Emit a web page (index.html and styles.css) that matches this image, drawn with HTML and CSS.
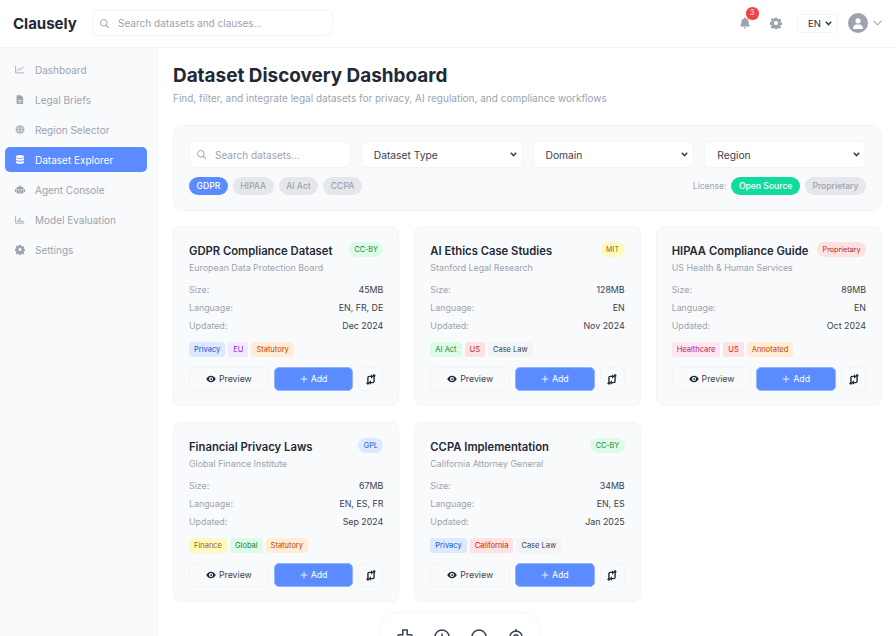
FILE: index.html
```html
<!DOCTYPE html>
<html lang="en">
<head>
  <meta charset="UTF-8">
  <meta name="viewport" content="width=device-width, initial-scale=1.0">
  <title>Clausely - Dataset Discovery</title>
  <link rel="stylesheet" href="styles.css">
</head>
<body>
  <!-- Shared icons -->
  <svg class="sprite" width="0" height="0">
    <symbol id="i-search" viewBox="0 0 16 16"><circle cx="7" cy="7" r="4.8" fill="none" stroke="currentColor" stroke-width="1.4"/><path d="M10.6 10.6 14 14" fill="none" stroke="currentColor" stroke-width="1.5" stroke-linecap="round"/></symbol>
    <symbol id="i-eye" viewBox="0 0 16 16"><path fill-rule="evenodd" d="M8 2.8c3.4 0 6.2 2.4 7.6 5.2-1.4 2.8-4.2 5.2-7.6 5.2S1.800 10.800.4 8C1.800 5.200 4.600 2.800 8 2.800ZM8 4.700a3.300 3.300 0 1 0 0 6.600 3.300 3.300 0 0 0 0-6.600Zm0 1.600a1.700 1.700 0 1 1-1.600 2.200c.6.200 1.500-.5 1.100-1.900.2-.2.300-.3.500-.3Z"/></symbol>
    <symbol id="i-plus" viewBox="0 0 12 12"><path d="M6 1.500v9M1.500 6h9" fill="none" stroke="currentColor" stroke-width="1.300" stroke-linecap="round"/></symbol>
    <symbol id="i-compare" viewBox="0 0 14 16"><path fill="none" stroke="currentColor" stroke-width="2" d="M2.500 12V5.500a2 2 0 0 1 2-2h3M11.500 4v6.500a2 2 0 0 1-2 2h-3"/><path d="M7 .2l3.500 3.300L7 6.800zM7 9.200l-3.500 3.300L7 15.800z"/><circle cx="2.500" cy="13.500" r="2"/><circle cx="11.500" cy="2.500" r="2"/></symbol>
  </svg>

  <header class="topbar">
    <div class="logo">Clausely</div>
    <div class="top-search">
      <svg class="search-icon"><use href="#i-search"/></svg>
      <input type="text" placeholder="Search datasets and clauses...">
    </div>
    <div class="top-actions">
      <div class="bell">
        <svg width="10" height="12" viewBox="0 0 12 14"><path d="M6 0c.6 0 1 .4 1 1v.6c2 .4 3.400 2.100 3.400 4.200v.8c0 1.300.5 2.500 1.300 3.500.3.400 0 1-.5 1H.8c-.5 0-.8-.6-.5-1 .8-1 1.300-2.200 1.300-3.500v-.8c0-2.100 1.400-3.800 3.400-4.200V1c0-.6.400-1 1-1ZM4.500 12h3c0 .9-.7 1.700-1.500 1.700S4.500 12.900 4.500 12Z"/></svg>
        <span class="badge">3</span>
      </div>
      <svg class="gear" width="12" height="12" viewBox="0 0 16 16"><path fill-rule="evenodd" d="M6.600.5h2.800l.4 2 1.300.6 1.800-1.100 2 2-1.100 1.800.6 1.300 2 .4v2.800l-2 .4-.6 1.300 1.100 1.800-2 2-1.800-1.100-1.300.6-.4 2H6.600l-.4-2-1.300-.6-1.800 1.100-2-2 1.100-1.800-.6-1.300-2-.4V6.900l2-.4.6-1.300L1.100 3.400l2-2 1.800 1.100 1.300-.6ZM8 5.300a2.800 2.800 0 1 0 0 5.600 2.800 2.800 0 0 0 0-5.600Z"/></svg>
      <select class="lang"><option>EN</option></select>
      <div class="avatar">
        <svg width="10" height="11" viewBox="0 0 10 11"><circle cx="5" cy="2.800" r="2.600"/><path d="M.4 11c-.3 0-.4-.2-.4-.5C0 8.200 1.600 6.400 3.500 6.400h3C8.400 6.400 10 8.200 10 10.500c0 .3-.1.500-.4.500Z"/></svg>
      </div>
      <svg class="chevron" width="9" height="6" viewBox="0 0 10 6"><path d="M1 1l4 4 4-4" fill="none" stroke="currentColor" stroke-width="1.200" stroke-linecap="round"/></svg>
    </div>
  </header>

  <div class="layout">
    <nav class="sidebar">
      <a class="nav-item"><svg viewBox="0 0 16 16"><path d="M1 2v11.500h14" fill="none" stroke="currentColor" stroke-width="1.300"/><path d="M3.500 10.500 6.500 6.500l2.500 2 4.500-5" fill="none" stroke="currentColor" stroke-width="1.300"/></svg>Dashboard</a>
      <a class="nav-item"><svg viewBox="0 0 16 16"><path fill-rule="evenodd" d="M3.500 1h5.700L13 4.800V14a1 1 0 0 1-1 1H3.500a1 1 0 0 1-1-1V2a1 1 0 0 1 1-1Zm1.500 8v1.200h5.500V9Zm0 2.500v1.200h5.500v-1.200Z"/></svg>Legal Briefs</a>
      <a class="nav-item"><svg viewBox="0 0 16 16"><circle cx="8" cy="8" r="7"/><path d="M1 5.800h14M1 10.200h14M8 1c-4 4-4 10 0 14M8 1c4 4 4 10 0 14" fill="none" stroke="#f9fafb" stroke-width="1"/></svg>Region Selector</a>
      <a class="nav-item active"><svg viewBox="0 0 16 16"><ellipse cx="8" cy="3.300" rx="6.500" ry="2.500"/><path d="M1.500 5.300C3 7.300 13 7.300 14.500 5.300v2.900c-1.500 2.300-11.500 2.300-13 0Z"/><path d="M1.500 10C3 12 13 12 14.500 10v2.700c-1 2.900-12 2.900-13 0Z"/></svg>Dataset Explorer</a>
      <a class="nav-item"><svg viewBox="0 0 16 16"><path fill-rule="evenodd" d="M8 1a.8.800 0 0 1 .8.800V3.500h2.400A2.300 2.300 0 0 1 13.500 5.800v6.400a2.300 2.300 0 0 1-2.300 2.300H4.800a2.300 2.300 0 0 1-2.300-2.300V5.800a2.300 2.300 0 0 1 2.300-2.300h2.400V1.800A.8.800 0 0 1 8 1ZM5.700 7.200a1.300 1.300 0 1 0 0 2.600 1.300 1.300 0 0 0 0-2.600Zm4.600 0a1.300 1.300 0 1 0 0 2.600 1.300 1.300 0 0 0 0-2.600ZM5.500 11.500v1h5v-1Z"/><rect x="0" y="7" width="1.800" height="5" rx=".6"/><rect x="14.200" y="7" width="1.800" height="5" rx=".6"/></svg>Agent Console</a>
      <a class="nav-item"><svg viewBox="0 0 16 16"><path d="M1 2v11.800h14" fill="none" stroke="currentColor" stroke-width="1.400"/><path d="M4 8h1.800v4H4zM7 5h1.800v7H7zM10 9h1.800v3H10zM12.500 10.500H14V12h-1.500z"/></svg>Model Evaluation</a>
      <a class="nav-item"><svg viewBox="0 0 16 16"><path fill-rule="evenodd" d="M6.600.5h2.800l.4 2 1.300.6 1.800-1.100 2 2-1.100 1.800.6 1.300 2 .4v2.800l-2 .4-.6 1.300 1.100 1.800-2 2-1.800-1.100-1.300.6-.4 2H6.600l-.4-2-1.300-.6-1.800 1.100-2-2 1.100-1.800-.6-1.300-2-.4V6.900l2-.4.6-1.300L1.100 3.400l2-2 1.800 1.100 1.300-.6ZM8 5.600a2.400 2.400 0 1 0 0 4.800 2.400 2.400 0 0 0 0-4.800Z"/></svg>Settings</a>
    </nav>

    <main class="content">
      <h1>Dataset Discovery Dashboard</h1>
      <p class="subtitle">Find, filter, and integrate legal datasets for privacy, AI regulation, and compliance workflows</p>

      <section class="filters">
        <div class="filter-row">
          <div class="filter-search">
            <svg class="search-icon"><use href="#i-search"/></svg>
            <input type="text" placeholder="Search datasets...">
          </div>
          <select><option>Dataset Type</option></select>
          <select><option>Domain</option></select>
          <select><option>Region</option></select>
        </div>
        <div class="chip-row">
          <div class="chips">
            <span class="chip chip-blue">GDPR</span>
            <span class="chip">HIPAA</span>
            <span class="chip">AI Act</span>
            <span class="chip">CCPA</span>
          </div>
          <div class="chips">
            <span class="license-label">License:</span>
            <span class="chip chip-green">Open Source</span>
            <span class="chip">Proprietary</span>
          </div>
        </div>
      </section>

      <section class="card-grid">
        <article class="card">
          <div class="card-head"><h3>GDPR Compliance Dataset</h3><span class="pill green">CC-BY</span></div>
          <p class="source">European Data Protection Board</p>
          <dl class="meta">
            <div><dt>Size:</dt><dd>45MB</dd></div>
            <div><dt>Language:</dt><dd>EN, FR, DE</dd></div>
            <div><dt>Updated:</dt><dd>Dec 2024</dd></div>
          </dl>
          <div class="tags"><span class="tag blue">Privacy</span><span class="tag purple">EU</span><span class="tag orange">Statutory</span></div>
          <div class="card-actions">
            <button class="btn"><svg class="eye"><use href="#i-eye"/></svg>Preview</button>
            <button class="btn btn-add"><svg class="plus"><use href="#i-plus"/></svg>Add</button>
            <button class="btn btn-icon"><svg class="compare"><use href="#i-compare"/></svg></button>
          </div>
        </article>

        <article class="card">
          <div class="card-head"><h3>AI Ethics Case Studies</h3><span class="pill yellow">MIT</span></div>
          <p class="source">Stanford Legal Research</p>
          <dl class="meta">
            <div><dt>Size:</dt><dd>128MB</dd></div>
            <div><dt>Language:</dt><dd>EN</dd></div>
            <div><dt>Updated:</dt><dd>Nov 2024</dd></div>
          </dl>
          <div class="tags"><span class="tag green">AI Act</span><span class="tag red">US</span><span class="tag gray">Case Law</span></div>
          <div class="card-actions">
            <button class="btn"><svg class="eye"><use href="#i-eye"/></svg>Preview</button>
            <button class="btn btn-add"><svg class="plus"><use href="#i-plus"/></svg>Add</button>
            <button class="btn btn-icon"><svg class="compare"><use href="#i-compare"/></svg></button>
          </div>
        </article>

        <article class="card">
          <div class="card-head"><h3>HIPAA Compliance Guide</h3><span class="pill red">Proprietary</span></div>
          <p class="source">US Health &amp; Human Services</p>
          <dl class="meta">
            <div><dt>Size:</dt><dd>89MB</dd></div>
            <div><dt>Language:</dt><dd>EN</dd></div>
            <div><dt>Updated:</dt><dd>Oct 2024</dd></div>
          </dl>
          <div class="tags"><span class="tag pink">Healthcare</span><span class="tag red">US</span><span class="tag orange">Annotated</span></div>
          <div class="card-actions">
            <button class="btn"><svg class="eye"><use href="#i-eye"/></svg>Preview</button>
            <button class="btn btn-add"><svg class="plus"><use href="#i-plus"/></svg>Add</button>
            <button class="btn btn-icon"><svg class="compare"><use href="#i-compare"/></svg></button>
          </div>
        </article>

        <article class="card">
          <div class="card-head"><h3>Financial Privacy Laws</h3><span class="pill blue">GPL</span></div>
          <p class="source">Global Finance Institute</p>
          <dl class="meta">
            <div><dt>Size:</dt><dd>67MB</dd></div>
            <div><dt>Language:</dt><dd>EN, ES, FR</dd></div>
            <div><dt>Updated:</dt><dd>Sep 2024</dd></div>
          </dl>
          <div class="tags"><span class="tag yellow">Finance</span><span class="tag green">Global</span><span class="tag orange">Statutory</span></div>
          <div class="card-actions">
            <button class="btn"><svg class="eye"><use href="#i-eye"/></svg>Preview</button>
            <button class="btn btn-add"><svg class="plus"><use href="#i-plus"/></svg>Add</button>
            <button class="btn btn-icon"><svg class="compare"><use href="#i-compare"/></svg></button>
          </div>
        </article>

        <article class="card">
          <div class="card-head"><h3>CCPA Implementation</h3><span class="pill green">CC-BY</span></div>
          <p class="source">California Attorney General</p>
          <dl class="meta">
            <div><dt>Size:</dt><dd>34MB</dd></div>
            <div><dt>Language:</dt><dd>EN, ES</dd></div>
            <div><dt>Updated:</dt><dd>Jan 2025</dd></div>
          </dl>
          <div class="tags"><span class="tag blue">Privacy</span><span class="tag red">California</span><span class="tag gray">Case Law</span></div>
          <div class="card-actions">
            <button class="btn"><svg class="eye"><use href="#i-eye"/></svg>Preview</button>
            <button class="btn btn-add"><svg class="plus"><use href="#i-plus"/></svg>Add</button>
            <button class="btn btn-icon"><svg class="compare"><use href="#i-compare"/></svg></button>
          </div>
        </article>
      </section>
    </main>
  </div>

  <!-- Floating map controls, cut off by the bottom of the window -->
  <div class="float-tools">
    <svg viewBox="0 0 16 16"><path d="M5.800 1h4.400v4.800H14a1 1 0 0 1 1 1V10H1V6.800a1 1 0 0 1 1-1h3.800Z" fill="none" stroke="currentColor" stroke-width="1.500"/></svg>
    <svg viewBox="0 0 16 16"><circle cx="8" cy="8" r="7" fill="none" stroke="currentColor" stroke-width="1.500"/><path d="M8 4.500v7M4.500 8h7" fill="none" stroke="currentColor" stroke-width="1.500"/></svg>
    <svg viewBox="0 0 16 16"><circle cx="8" cy="8" r="7" fill="none" stroke="currentColor" stroke-width="1.500"/><path d="M4.500 8h7" fill="none" stroke="currentColor" stroke-width="1.500"/></svg>
    <svg viewBox="0 0 16 16"><circle cx="8" cy="8" r="6" fill="none" stroke="currentColor" stroke-width="1.500"/><circle cx="8" cy="8" r="2.200" fill="none" stroke="currentColor" stroke-width="1.500"/><path d="M8 0v3M0 8h3M13 8h3" fill="none" stroke="currentColor" stroke-width="1.500"/></svg>
  </div>
</body>
</html>
```
FILE: styles.css
```css
* {
  box-sizing: border-box;
}
html, body {
  height: 636px;
  overflow: hidden;
}
body {
  margin: 0;
  position: relative;
  font-family: Inter, "Noto Sans", sans-serif;
  color: #1f2937;
  background: #fff;
}
.sprite {
  position: absolute;
}
input, select, button {
  font-family: inherit;
}
input::placeholder {
  color: #9ca3af;
}
select {
  appearance: none;
  background-color: #fff;
  background-image: url("data:image/svg+xml,%3Csvg xmlns='http://www.w3.org/2000/svg' width='7' height='5' viewBox='0 0 7 5'%3E%3Cpath d='M.8.8 3.500 3.600 6.200.8' fill='none' stroke='%23374151' stroke-width='1.500'/%3E%3C/svg%3E");
  background-repeat: no-repeat;
  background-position: right 5px center;
}

/* Top bar */
.topbar {
  height: 48px;
  display: flex;
  align-items: center;
  padding: 0 14px 1px 13px;
  background: #fff;
  border-bottom: 1px solid #f3f4f6;
}
.logo {
  width: 79px;
  font-size: 15px;
  font-weight: 700;
  color: #1f2937;
}
.top-search {
  position: relative;
  width: 241px;
  height: 26px;
}
.top-search input, .filter-search input {
  width: 100%;
  height: 100%;
  padding: 0 8px 0 25px;
  font-size: 10px;
  background: #fff;
  border: 1px solid #f3f4f6;
  border-radius: 6px;
  outline: none;
}
.search-icon {
  position: absolute;
  left: 7px;
  top: 8px;
  width: 11px;
  height: 11px;
  color: #9ca3af;
}
.top-actions {
  margin-left: auto;
  display: flex;
  align-items: center;
}
.bell {
  position: relative;
  display: flex;
  fill: #9ca3af;
  margin-right: 20px;
}
.badge {
  position: absolute;
  left: 6px;
  top: -10px;
  width: 12.5px;
  height: 12.5px;
  border-radius: 50%;
  background: #ef4444;
  color: #fff;
  font-size: 7px;
  line-height: 12.5px;
  text-align: center;
}
.gear {
  fill: #9ca3af;
  margin-right: 15px;
}
.lang {
  width: 41px;
  height: 19px;
  margin-right: 10px;
  font-size: 9.500px;
  color: #1f2937;
  border: 1px solid #f3f4f6;
  border-radius: 5px;
  padding-left: 10px;
}
.avatar {
  width: 20px;
  height: 20px;
  border-radius: 50%;
  background: #9ca3af;
  fill: #fff;
  display: flex;
  align-items: center;
  justify-content: center;
  margin-right: 5px;
}
.chevron {
  color: #9ca3af;
}

/* Page frame */
.layout {
  display: flex;
  height: 588px;
}
.sidebar {
  width: 158px;
  flex: none;
  padding: 9px 10px 0 5px;
  background: #f9fafb;
  border-right: 1px solid #f3f4f6;
}
.nav-item {
  height: 25px;
  margin-bottom: 5px;
  padding-left: 10px;
  display: flex;
  align-items: center;
  gap: 10px;
  font-size: 10px;
  color: #9ca3af;
  fill: #9ca3af;
  border-radius: 5px;
}
.nav-item svg {
  width: 10px;
  height: 11px;
  flex: none;
}
.nav-item.active {
  background: #5b8cff;
  color: #fff;
  fill: #fff;
}
.content {
  flex: 1;
  padding: 16px 14px 0 15px;
}
h1 {
  margin: 0;
  font-size: 18.900px;
  line-height: 24px;
  font-weight: 700;
  color: #1f2937;
}
.subtitle {
  margin: 3px 0 0;
  font-size: 10px;
  line-height: 14px;
  color: #9ca3af;
}

/* Filter panel */
.filters {
  margin-top: 20px;
  height: 86px;
  padding: 15px;
  background: #f9fafb;
  border: 1px solid #f3f4f6;
  border-radius: 10px;
}
.filter-row {
  display: grid;
  grid-template-columns: repeat(4, 1fr);
  gap: 10px;
  height: 27px;
}
.filter-search {
  position: relative;
}
.filter-row select {
  height: 27px;
  padding-left: 12px;
  font-size: 10.250px;
  color: #374151;
  border: 1px solid #f3f4f6;
  border-radius: 5px;
}
.chip-row {
  margin-top: 9px;
  display: flex;
  justify-content: space-between;
}
.chips {
  display: flex;
  align-items: center;
  gap: 5px;
}
.chip {
  height: 18px;
  padding: 0 7.500px;
  border-radius: 9px;
  font-size: 8.600px;
  font-weight: 500;
  line-height: 18px;
  color: #9ca3af;
  background: #e5e7eb;
}
.chip-blue {
  background: #5b8cff;
  color: #fff;
}
.chip-green {
  background: #10dca0;
  color: #fff;
}
.license-label {
  font-size: 8.500px;
  color: #9ca3af;
}

/* Dataset cards */
.card-grid {
  margin-top: 15px;
  display: grid;
  grid-template-columns: repeat(3, 1fr);
  gap: 16px 15px;
  align-items: start;
}
.card {
  height: 180px;
  padding: 15px;
  background: #f9fafb;
  border: 1px solid #f3f4f6;
  border-radius: 8px;
}
.card-head {
  display: flex;
  justify-content: space-between;
  align-items: flex-start;
}
.card-head h3 {
  margin: 0;
  font-size: 11.250px;
  line-height: 18px;
  font-weight: 600;
  color: #1f2937;
  white-space: nowrap;
}
.pill {
  height: 15px;
  padding: 0 5.500px;
  border-radius: 8px;
  font-size: 7.200px;
  line-height: 15px;
}
.pill.green { background: #dcfce7; color: #15803d; }
.pill.yellow { background: #fef9c3; color: #a16207; }
.pill.red { background: #fee2e2; color: #b91c1c; }
.pill.blue { background: #dbeafe; color: #1d4ed8; }
.source {
  margin: 1px 0 0;
  font-size: 8.850px;
  line-height: 13px;
  color: #9ca3af;
}
.meta {
  margin: 7px 0 0;
}
.meta div {
  display: flex;
  justify-content: space-between;
  height: 18px;
  font-size: 8.850px;
  line-height: 17px;
}
.meta dt {
  color: #9ca3af;
}
.meta dd {
  margin: 0;
  color: #374151;
}
.tags {
  margin-top: 7px;
  display: flex;
  gap: 3px;
}
.tag {
  height: 15px;
  padding: 0 5px;
  border-radius: 3px;
  font-size: 7.500px;
  line-height: 15px;
}
.tag.blue { background: #dbeafe; color: #1d4ed8; }
.tag.purple { background: #f3e8ff; color: #7e22ce; }
.tag.orange { background: #ffedd5; color: #c2410c; }
.tag.green { background: #dcfce7; color: #15803d; }
.tag.red { background: #fee2e2; color: #b91c1c; }
.tag.gray { background: #f3f4f6; color: #374151; }
.tag.pink { background: #fce7f3; color: #be185d; }
.tag.yellow { background: #fef9c3; color: #a16207; }
.card-actions {
  margin-top: 10px;
  display: flex;
  gap: 5px;
}
.btn {
  flex: 1;
  height: 24px;
  display: flex;
  align-items: center;
  justify-content: center;
  gap: 3px;
  padding: 0;
  font-size: 8.750px;
  color: #374151;
  background: #f9fafb;
  border: 1px solid #f3f4f6;
  border-radius: 5px;
}
.btn-add {
  background: #5b8cff;
  border-color: #93b4ff;
  color: #fff;
}
.btn-icon {
  flex: 0 0 25px;
}
.eye {
  width: 10px;
  height: 10px;
  fill: #1f2937;
}
.plus {
  width: 8px;
  height: 8px;
}
.compare {
  width: 10px;
  height: 11px;
  color: #1f2937;
  fill: #1f2937;
}

/* Floating tools */
.float-tools {
  position: absolute;
  left: 380px;
  top: 612px;
  width: 160px;
  height: 48px;
  display: flex;
  justify-content: center;
  gap: 21px;
  padding-top: 16px;
  background: #fff;
  border: 1px solid #f6f7f8;
  border-radius: 16px;
  color: #374151;
}
.float-tools svg {
  width: 16px;
  height: 16px;
}
```
